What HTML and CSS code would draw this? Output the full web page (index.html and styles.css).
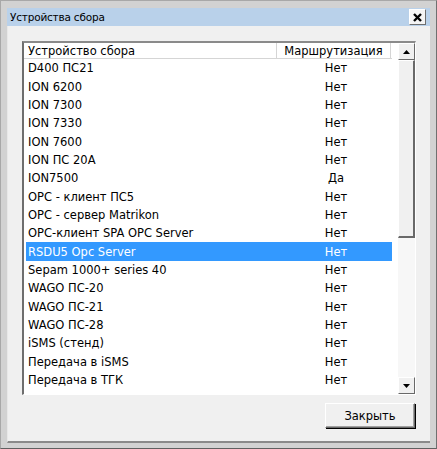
FILE: index.html
```html
<!DOCTYPE html>
<html lang="ru">
<head>
<meta charset="utf-8">
<title>Устройства сбора</title>
<link rel="stylesheet" href="styles.css">
</head>
<body>
<div class="frame">
  <div class="titlebar">
    <span class="title">Устройства сбора</span>
    <span class="close"><svg width="9" height="9" viewBox="0 0 9 9"><path d="M1 1L8 8M8 1L1 8" stroke="#000" stroke-width="2.4"/></svg></span>
  </div>
  <div class="client">
    <div class="listbox">
      <div class="list">
        <div class="head">
          <div class="hc c1">Устройство сбора</div>
          <div class="hc c2">Маршрутизация</div>
        </div>
        <div class="rows">
          <div class="row"><span class="c1">D400 ПС21</span><span class="c2">Нет</span></div>
          <div class="row"><span class="c1">ION 6200</span><span class="c2">Нет</span></div>
          <div class="row"><span class="c1">ION 7300</span><span class="c2">Нет</span></div>
          <div class="row"><span class="c1">ION 7330</span><span class="c2">Нет</span></div>
          <div class="row"><span class="c1">ION 7600</span><span class="c2">Нет</span></div>
          <div class="row"><span class="c1">ION ПС 20А</span><span class="c2">Нет</span></div>
          <div class="row"><span class="c1">ION7500</span><span class="c2">Да</span></div>
          <div class="row"><span class="c1">OPC - клиент ПС5</span><span class="c2">Нет</span></div>
          <div class="row"><span class="c1">OPC - сервер Matrikon</span><span class="c2">Нет</span></div>
          <div class="row"><span class="c1">OPC-клиент SPA OPC Server</span><span class="c2">Нет</span></div>
          <div class="row sel"><span class="c1">RSDU5 Opc Server</span><span class="c2">Нет</span></div>
          <div class="row"><span class="c1">Sepam 1000+ series 40</span><span class="c2">Нет</span></div>
          <div class="row"><span class="c1">WAGO ПС-20</span><span class="c2">Нет</span></div>
          <div class="row"><span class="c1">WAGO ПС-21</span><span class="c2">Нет</span></div>
          <div class="row"><span class="c1">WAGO ПС-28</span><span class="c2">Нет</span></div>
          <div class="row"><span class="c1">iSMS (стенд)</span><span class="c2">Нет</span></div>
          <div class="row"><span class="c1">Передача в iSMS</span><span class="c2">Нет</span></div>
          <div class="row"><span class="c1">Передача в ТГК</span><span class="c2">Нет</span></div>
        </div>
      </div>
      <div class="scrollbar">
        <div class="sbtn"><svg width="7" height="4" viewBox="0 0 7 4"><path d="M3.5 0L7 4H0Z" fill="#000"/></svg></div>
        <div class="track">
          <div class="thumb"></div>
        </div>
        <div class="sbtn"><svg width="7" height="4" viewBox="0 0 7 4"><path d="M0 0H7L3.5 4Z" fill="#000"/></svg></div>
      </div>
    </div>
    <div class="actions">
      <button class="btn">Закрыть</button>
    </div>
  </div>
</div>
</body>
</html>
```
FILE: styles.css
```css
html, body {
  margin: 0;
  padding: 0;
  background: #cfcfcf;
}
.frame {
  width: 437px;
  height: 449px;
  box-sizing: border-box;
  padding: 7px 6px 5px 6px;
  background: #d2d2d2;
  border: 1px solid #a8a8a8;
  border-right-color: #707070;
  border-bottom-color: #606060;
  display: flex;
  flex-direction: column;
}
.titlebar {
  height: 18px;
  flex: none;
  background: #b9d1ea;
  display: flex;
  align-items: center;
  justify-content: space-between;
  padding: 0 4px 0 3px;
}
.title {
  font-family: "DejaVu Sans", sans-serif;
  font-size: 10.5px;
  color: #000;
  letter-spacing: -0.2px;
}
.close {
  width: 15px;
  height: 14px;
  background: #f4f4f4;
  border: 1px solid #fff;
  border-right-color: #6e6e6e;
  border-bottom-color: #6e6e6e;
  display: flex;
  align-items: center;
  justify-content: center;
}
.client {
  flex: 1;
  background: #f0f0f0;
  padding: 15px 14px 0 14px;
  display: flex;
  flex-direction: column;
  border-bottom: 2px solid #8a8a8a;
  border-left: 1px solid #e8e8e8;
}
.listbox {
  height: 354px;
  flex: none;
  box-sizing: border-box;
  border: 1px solid #a0a0a0;
  border-left: 2px solid #6e6e6e;
  border-top: 2px solid #8a8a8a;
  border-right-color: #fff;
  border-bottom-color: #fff;
  background: #fff;
  display: flex;
  font-family: "DejaVu Sans", sans-serif;
  font-size: 11.5px;
  color: #000;
}
.list {
  flex: 1;
  display: flex;
  flex-direction: column;
  overflow: hidden;
}
.head {
  height: 15px;
  flex: none;
  display: flex;
  border-bottom: 1px solid #d5d5d5;
}
.hc {
  display: flex;
  align-items: center;
  box-sizing: border-box;
  border-right: 1px solid #d5d5d5;
}
.c1 {
  width: 253px;
  padding-left: 4px;
  box-sizing: border-box;
}
.c2 {
  width: 114px;
  text-align: center;
  box-sizing: border-box;
}
.hc.c2 {
  justify-content: center;
}
.rows {
  padding: 0 0 0 2px;
}
.row {
  height: 18.35px;
  display: flex;
  align-items: center;
  width: 367px;
}
.row .c1 {
  padding-left: 2px;
}
.row.sel {
  background: #3399ff;
  color: #fff;
}
.scrollbar {
  width: 17px;
  flex: none;
  display: flex;
  flex-direction: column;
  background: #f4f4f4;
  border-left: 1px solid #fff;
  margin-left: 5px;
}
.sbtn {
  height: 17px;
  flex: none;
  box-sizing: border-box;
  background: #f0f0f0;
  border: 1px solid #fff;
  border-right-color: #696969;
  border-bottom-color: #696969;
  display: flex;
  align-items: center;
  justify-content: center;
}
.track {
  flex: 1;
  background: #f7f7f7;
}
.thumb {
  height: 178px;
  box-sizing: border-box;
  background: #f0f0f0;
  border: 1px solid #fff;
  border-right: 2px solid #696969;
  border-bottom: 2px solid #696969;
}
.actions {
  display: flex;
  justify-content: flex-end;
  padding-top: 8px;
  padding-right: 0;
}
.btn {
  width: 90px;
  height: 25px;
  box-sizing: border-box;
  font-family: "DejaVu Sans", sans-serif;
  font-size: 11.5px;
  color: #000;
  background: #f0f0f0;
  border: 1px solid #fff;
  border-right-color: #696969;
  border-bottom-color: #696969;
  box-shadow: 1px 1px 0 #000, inset -1px -1px 0 #a0a0a0;
  padding: 0;
  margin-right: 1px;
}
```
